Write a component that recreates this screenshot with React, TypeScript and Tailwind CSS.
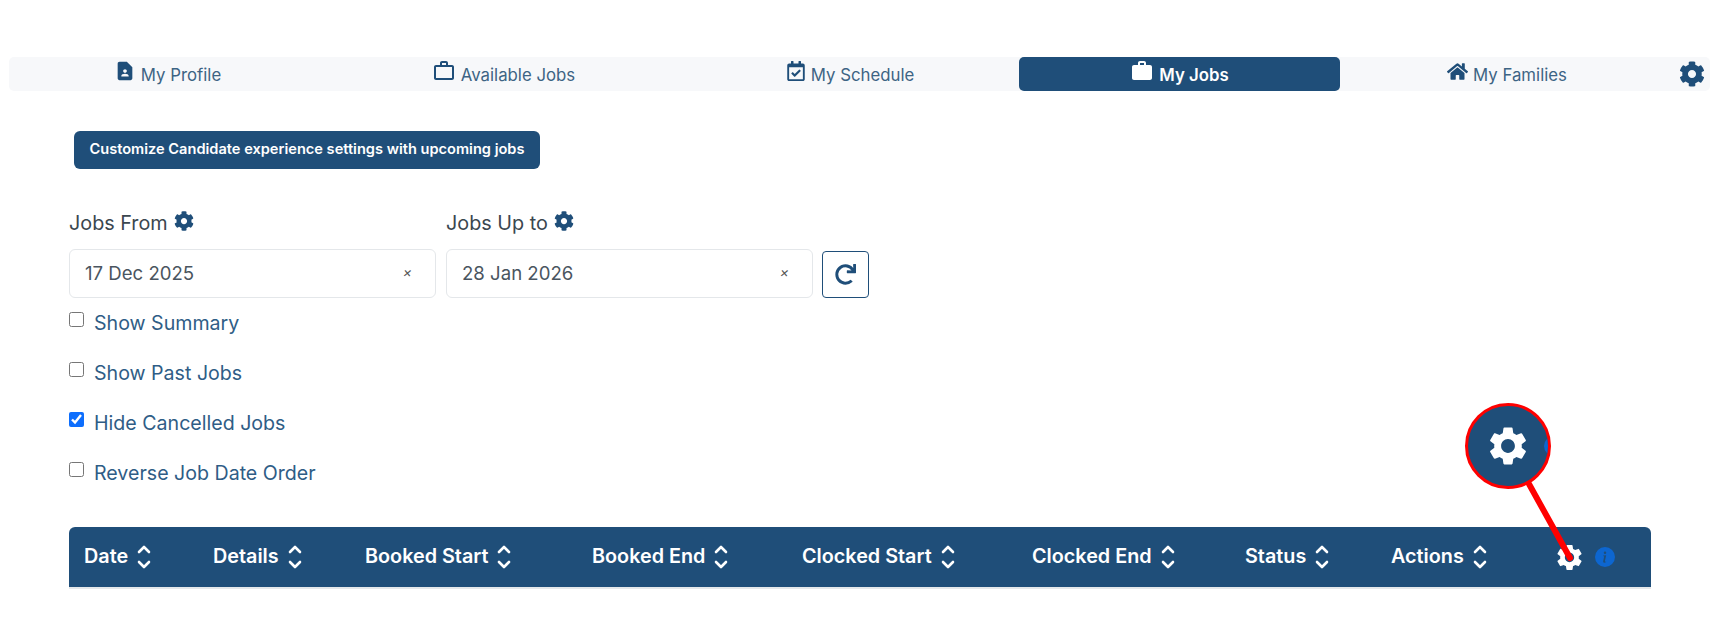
import { BsInfoCircleFill } from "react-icons/bs";
import { FaCog, FaHome, FaRedo, FaRegCalendarCheck } from "react-icons/fa";
import { MdContactPage, MdSettings, MdWork, MdWorkOutline } from "react-icons/md";

const navy = "text-[#1f4e79]";

function NavTab({ icon, label, active }: { icon: React.ReactNode; label: string; active?: boolean }) {
  return (
    <div
      className={
        active
          ? "flex items-center justify-center gap-[5px] rounded-[5px] bg-[#1f4e79] font-semibold text-white"
          : "flex items-center justify-center gap-[5px] text-[#3d6484]"
      }
    >
      <span className={active ? "-mt-[6px] text-white" : `-mt-[6px] ${navy}`}>{icon}</span>
      <span className="pt-[3px]">{label}</span>
    </div>
  );
}

function FilterCheck({ label, checked }: { label: string; checked?: boolean }) {
  return (
    <label className="flex h-[50px] items-center text-[19.6px] text-[#2f5d86]">
      <input type="checkbox" defaultChecked={checked} className="-mt-[5px] mr-[10px] h-[15px] w-[15px] accent-[#0d6efd]" />
      <span className="pt-[3px]">{label}</span>
    </label>
  );
}

function DateField({ label, value }: { label: string; value: string }) {
  return (
    <div className="w-[367px]">
      <div className="flex h-[36px] items-center gap-[6px] text-[19.8px] text-[#3b4750]">
        <span className="pt-[2px]">{label}</span>
        <FaCog className={`-mt-1 ${navy}`} size={20} />
      </div>
      <div className="mt-[8px] flex h-[49px] items-center justify-between rounded-[6px] border border-[#e4e7ea] pl-[15px] pr-[23px] text-[18.6px] text-[#4a5560]">
        <span className="pt-[1px]">{value}</span>
        <span className="-mt-1 text-[14px] italic text-[#555]">×</span>
      </div>
    </div>
  );
}

function SortHead({ label, left }: { label: string; left: number }) {
  return (
    <div className="absolute top-0 flex h-full items-center gap-[9px]" style={{ left }}>
      <span>{label}</span>
      <svg width="14" height="26" viewBox="0 0 14 26" fill="none" stroke="currentColor" strokeWidth="2.6" strokeLinecap="round" strokeLinejoin="round">
        <path d="M2 8L7 3L12 8" />
        <path d="M2 18L7 23L12 18" />
      </svg>
    </div>
  );
}

export default function App() {
  return (
    <div className="relative h-[617px] w-[1718px] overflow-hidden bg-white font-['Inter','Open_Sans',sans-serif]">
      <div className="pl-[9px] pr-[8px] pt-[57px]">
        <nav className="grid h-[34px] grid-cols-[317px_355px_338px_321px_334px_36px] rounded-[5px] bg-[#f7f8fa] text-[16.8px]">
          <NavTab icon={<MdContactPage size={22} />} label="My Profile" />
          <NavTab icon={<MdWorkOutline size={24} />} label="Available Jobs" />
          <NavTab icon={<FaRegCalendarCheck size={20} />} label="My Schedule" />
          <NavTab icon={<MdWork size={24} />} label="My Jobs" active />
          <NavTab icon={<FaHome size={21} />} label="My Families" />
          <div className={`flex items-center justify-center ${navy}`}>
            <FaCog size={26} />
          </div>
        </nav>
      </div>

      <div className="pl-[69px] pr-[67px]">
        <button className="ml-[5px] mt-[40px] block h-[38px] w-[466px] rounded-[6px] bg-[#1f4e79] text-[14.6px] font-semibold text-white">
          Customize Candidate experience settings with upcoming jobs
        </button>

        <div className="mt-[36px] flex items-end gap-[10px]">
          <DateField label="Jobs From" value="17 Dec 2025" />
          <DateField label="Jobs Up to" value="28 Jan 2026" />
          <button className={`-ml-px flex h-[47px] w-[47px] items-center justify-center rounded-[4px] border border-[#1f4e79] ${navy}`}>
            <FaRedo size={21} />
          </button>
        </div>

        <div className="-mt-[1px]">
          <FilterCheck label="Show Summary" />
          <FilterCheck label="Show Past Jobs" />
          <FilterCheck label="Hide Cancelled Jobs" checked />
          <FilterCheck label="Reverse Job Date Order" />
        </div>

        <div className="relative mt-[30px] h-[62px] rounded-t-[6px] border-b-2 border-[#e5e8eb] bg-[#1f4e79] text-[19.8px] font-semibold text-white">
          <SortHead label="Date" left={15} />
          <SortHead label="Details" left={144} />
          <SortHead label="Booked Start" left={296} />
          <SortHead label="Booked End" left={523} />
          <SortHead label="Clocked Start" left={733} />
          <SortHead label="Clocked End" left={963} />
          <SortHead label="Status" left={1176} />
          <SortHead label="Actions" left={1322} />
          <MdSettings className="absolute left-[1485px] top-[15px]" size={31} />
          <BsInfoCircleFill className="absolute left-[1526px] top-[20px] text-[#0d66d0]" size={20} />
        </div>
      </div>

      {/* magnifier callout */}
      <div className="absolute left-[1465px] top-[403px] h-[86px] w-[86px] overflow-hidden rounded-full border-[3px] border-[#f00] bg-[#1f4e79]">
        <MdSettings className="absolute left-[17px] top-[17px] text-white" size={46} />
        <div className="absolute left-[76px] top-[30px] h-[20px] w-[20px] rounded-full bg-[#0d66d0]" />
      </div>
      <svg className="absolute left-0 top-0" width="1718" height="617" fill="none">
        <path d="M1529 484L1570 558" stroke="#f00" strokeWidth="6" strokeLinecap="round" />
      </svg>
    </div>
  );
}
